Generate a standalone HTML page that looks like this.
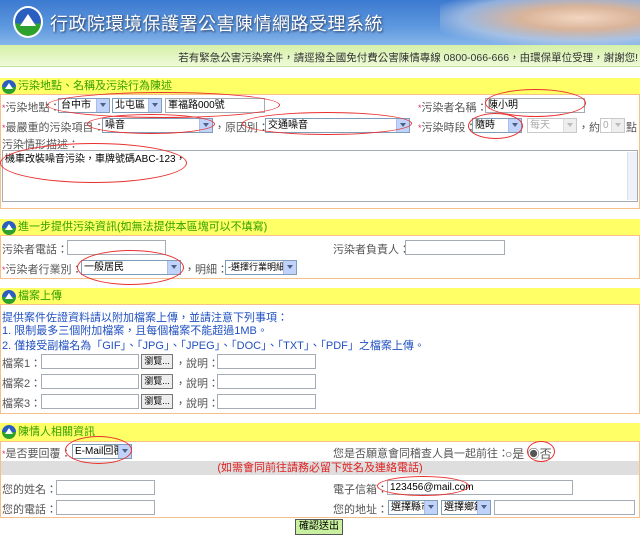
<!DOCTYPE html>
<html><head><meta charset="utf-8"><style>
*{margin:0;padding:0;box-sizing:border-box}
body{width:640px;height:541px;position:relative;background:#fff;font-family:"Liberation Sans","Noto Sans CJK TC",sans-serif;font-size:11px;color:#555;overflow:hidden}
.a{position:absolute;white-space:nowrap}
.banner{left:0;top:0;width:640px;height:45px;background:linear-gradient(180deg,#3c7ad0,#5e98de 60%,#86b5ea)}
.hand{right:0;top:0;width:200px;height:45px;background:radial-gradient(ellipse at 70% 40%,#f3d6c0 0,#d9b49a 30%,rgba(200,210,230,.6) 60%,rgba(100,150,220,0) 80%)}
.title{left:50px;top:10px;font-size:18px;color:#fff;letter-spacing:0.5px;text-shadow:1px 1px 2px #235}
.green{left:0;top:45px;width:640px;height:22px;background:linear-gradient(180deg,#d5f0a8,#eefad8);border-bottom:1px solid #c7e3a0}
.sec{position:absolute;left:0;width:640px;border:1px solid #f6c08a}
.hd{position:absolute;left:0;width:640px;height:17px;background:#ffff66;border-bottom:1px solid #f6c08a;color:#33a000;font-size:11px;line-height:17px;padding-left:18px}
.ic{position:absolute;left:2px;top:2px;width:14px;height:14px;border-radius:50%;background:linear-gradient(180deg,#2a5fc0 50%,#2ea02e 50%)}
.ic:after{content:"";position:absolute;left:3px;top:3px;border-left:4px solid transparent;border-right:4px solid transparent;border-bottom:6px solid #fff}
.in{position:absolute;height:15px;border:1px solid #a5acb5;background:#fff;font-size:10px;line-height:13px;padding-left:2px;color:#000;overflow:hidden;white-space:nowrap}
.sel{position:absolute;height:15px;border:1px solid #7f9db9;background:#fff;font-size:10px;line-height:13px;padding-left:2px;color:#000;overflow:hidden;white-space:nowrap}
.sel i{position:absolute;right:0;top:0;width:13px;height:13px;background:#c1d3fb;border-left:1px solid #a9bde8}
.sel i:after{content:"";position:absolute;left:3px;top:4px;border-left:3px solid transparent;border-right:3px solid transparent;border-top:4px solid #4d6185}
.dis{color:#aaa;border-color:#c9c9c9}
.dis i{background:#eee;border-left-color:#ddd}
.dis i:after{border-top-color:#bbb}
.st{color:#e0307a;font-size:9px}
.ell{position:absolute;border:1px solid #e8302e;border-radius:50%}
.blue{color:#2050c0}
.btn{position:absolute;height:15px;border:1px solid #777;background:#eee;font-size:9px;line-height:13px;text-align:center;color:#000}
</style></head><body>
<div class="a banner"></div>
<div class="a hand"></div>
<div class="a" style="left:13px;top:6px;width:30px;height:32px;border-radius:50%;background:linear-gradient(180deg,#2a5fc0 55%,#2ea02e 55%);border:2px solid #fff"></div>
<div class="a" style="left:20px;top:14px;border-left:8px solid transparent;border-right:8px solid transparent;border-bottom:12px solid #fff"></div>
<div class="a title">行政院環境保護署公害陳情網路受理系統</div>
<div class="a green"></div>
<div class="a" style="right:2px;top:50px;font-size:10.5px;color:#333">若有緊急公害污染案件，請逕撥全國免付費公害陳情專線 0800-066-666，由環保單位受理，謝謝您!</div>

<div class="sec" style="top:78px;height:131px"></div>
<div class="hd" style="top:78px"><span class="ic"></span>污染地點、名稱及污染行為陳述</div>
<div class="a" style="left:2px;top:99px"><span class="st">*</span>污染地點：</div>
<div class="sel" style="left:58px;top:98px;width:52px">台中市<i></i></div>
<div class="sel" style="left:112px;top:98px;width:50px">北屯區<i></i></div>
<div class="in" style="left:165px;top:98px;width:100px">軍福路000號</div>
<div class="a" style="left:418px;top:99px"><span class="st">*</span>污染者名稱：</div>
<div class="in" style="left:485px;top:98px;width:100px">陳小明</div>
<div class="a" style="left:2px;top:119px"><span class="st">*</span>最嚴重的污染項目：</div>
<div class="sel" style="left:102px;top:118px;width:111px">噪音<i></i></div>
<div class="a" style="left:214px;top:119px">，原因別：</div>
<div class="sel" style="left:265px;top:118px;width:145px">交通噪音<i></i></div>
<div class="a" style="left:418px;top:119px"><span class="st">*</span>污染時段：</div>
<div class="sel" style="left:472px;top:118px;width:50px">隨時<i></i></div>
<div class="sel dis" style="left:527px;top:118px;width:50px">每天<i></i></div>
<div class="a" style="left:578px;top:119px">，約</div>
<div class="sel dis" style="left:600px;top:118px;width:25px">0<i></i></div>
<div class="a" style="left:626px;top:119px">點</div>
<div class="a" style="left:2px;top:136px">污染情形描述：</div>
<div class="in" style="left:2px;top:150px;width:636px;height:52px;padding-top:2px">機車改裝噪音污染，車牌號碼ABC-123，</div>
<div class="a" style="right:3px;top:152px;width:10px;height:48px;background:#eef2f8;border-left:1px solid #dde"></div>

<div class="sec" style="top:219px;height:60px"></div>
<div class="hd" style="top:219px"><span class="ic"></span>進一步提供污染資訊(如無法提供本區塊可以不填寫)</div>
<div class="a" style="left:2px;top:241px">污染者電話：</div>
<div class="in" style="left:67px;top:240px;width:99px"></div>
<div class="a" style="left:333px;top:241px">污染者負責人：</div>
<div class="in" style="left:405px;top:240px;width:100px"></div>
<div class="a" style="left:2px;top:261px"><span class="st">*</span>污染者行業別：</div>
<div class="sel" style="left:81px;top:260px;width:100px">一般居民<i></i></div>
<div class="a" style="left:184px;top:261px">，明細：</div>
<div class="sel" style="left:225px;top:260px;width:72px;font-size:9px">-選擇行業明細-<i></i></div>

<div class="sec" style="top:288px;height:126px"></div>
<div class="hd" style="top:288px"><span class="ic"></span>檔案上傳</div>
<div class="a blue" style="left:2px;top:309px">提供案件佐證資料請以附加檔案上傳，並請注意下列事項：</div>
<div class="a blue" style="left:2px;top:322px">1. 限制最多三個附加檔案，且每個檔案不能超過1MB。</div>
<div class="a blue" style="left:2px;top:337px">2. 僅接受副檔名為「GIF」、「JPG」、「JPEG」、「DOC」、「TXT」、「PDF」之檔案上傳。</div>
<div class="a" style="left:2px;top:355px">檔案1：</div><div class="in" style="left:41px;top:354px;width:98px"></div><div class="btn" style="left:141px;top:354px;width:32px">瀏覽...</div><div class="a" style="left:175px;top:355px">，說明：</div><div class="in" style="left:217px;top:354px;width:99px"></div>
<div class="a" style="left:2px;top:375px">檔案2：</div><div class="in" style="left:41px;top:374px;width:98px"></div><div class="btn" style="left:141px;top:374px;width:32px">瀏覽...</div><div class="a" style="left:175px;top:375px">，說明：</div><div class="in" style="left:217px;top:374px;width:99px"></div>
<div class="a" style="left:2px;top:395px">檔案3：</div><div class="in" style="left:41px;top:394px;width:98px"></div><div class="btn" style="left:141px;top:394px;width:32px">瀏覽...</div><div class="a" style="left:175px;top:395px">，說明：</div><div class="in" style="left:217px;top:394px;width:99px"></div>

<div class="sec" style="top:423px;height:95px"></div>
<div class="hd" style="top:423px;height:19px;line-height:19px"><span class="ic"></span>陳情人相關資訊</div>
<div class="a" style="left:2px;top:445px"><span class="st">*</span>是否要回覆：</div>
<div class="sel" style="left:72px;top:444px;width:60px">E-Mail回覆<i></i></div>
<div class="a" style="left:333px;top:445px">您是否願意會同稽查人員一起前往：</div>
<div class="a" style="left:505px;top:445px;font-size:12px">○是 ◉否</div>
<div class="a" style="left:1px;top:461px;width:638px;height:14px;background:#dedede"></div>
<div class="a" style="left:0;top:461px;width:640px;text-align:center;color:#e02020;line-height:14px">(如需會同前往請務必留下姓名及連絡電話)</div>
<div class="a" style="left:2px;top:481px">您的姓名：</div><div class="in" style="left:56px;top:480px;width:99px"></div>
<div class="a" style="left:333px;top:481px">電子信箱：</div><div class="in" style="left:387px;top:480px;width:186px">123456@mail.com</div>
<div class="a" style="left:2px;top:501px">您的電話：</div><div class="in" style="left:56px;top:500px;width:99px"></div>
<div class="a" style="left:333px;top:501px">您的地址：</div>
<div class="sel" style="left:388px;top:500px;width:50px">選擇縣市<i></i></div>
<div class="sel" style="left:441px;top:500px;width:50px">選擇鄉鎮<i></i></div>
<div class="in" style="left:494px;top:500px;width:141px"></div>
<div class="btn" style="left:295px;top:519px;width:48px;height:16px;background:#c8f0a0;border:1px solid #555;line-height:14px;font-size:10px">確認送出</div>

<div class="ell" style="left:47px;top:92px;width:233px;height:26px"></div>
<div class="ell" style="left:485px;top:89px;width:101px;height:28px"></div>
<div class="ell" style="left:87px;top:114px;width:128px;height:20px"></div>
<div class="ell" style="left:242px;top:112px;width:170px;height:23px"></div>
<div class="ell" style="left:468px;top:113px;width:55px;height:26px"></div>
<div class="ell" style="left:0;top:143px;width:187px;height:40px"></div>
<div class="ell" style="left:77px;top:250px;width:107px;height:35px"></div>
<div class="ell" style="left:65px;top:436px;width:67px;height:28px"></div>
<div class="ell" style="left:527px;top:441px;width:28px;height:21px"></div>
<div class="ell" style="left:377px;top:476px;width:92px;height:20px"></div>
</body></html>
